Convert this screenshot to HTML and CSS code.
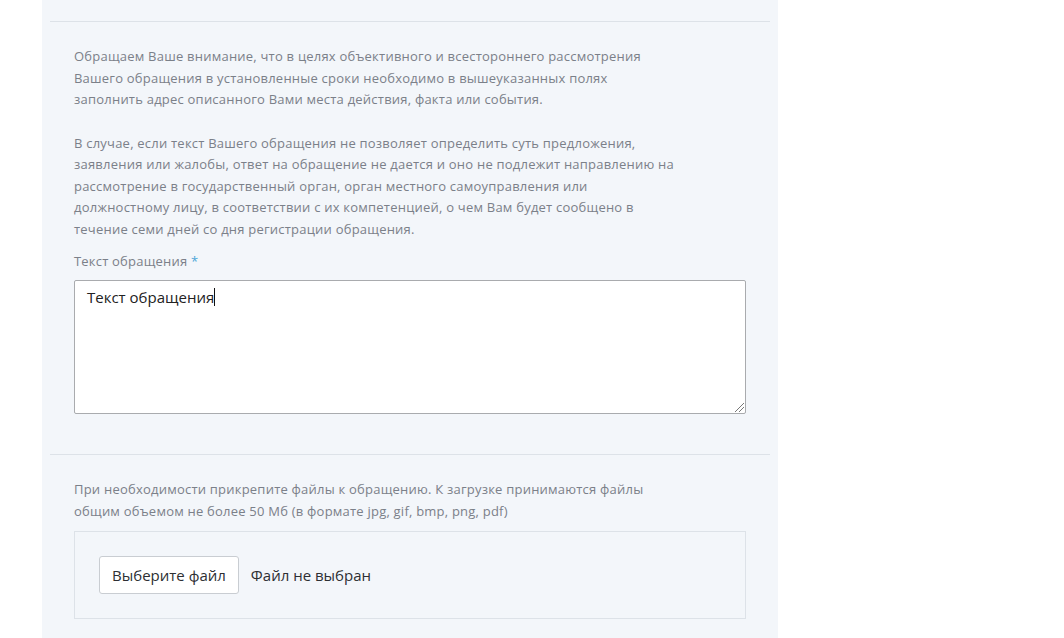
FILE: index.html
```html
<!DOCTYPE html>
<html lang="ru">
<head>
<meta charset="utf-8">
<link rel="stylesheet" href="styles.css">
</head>
<body>
<div class="panel">
  <hr class="divider top">
  <div class="section">
    <p class="note">Обращаем Ваше внимание, что в целях объективного и всестороннего рассмотрения<br>Вашего обращения в установленные сроки необходимо в вышеуказанных полях<br>заполнить адрес описанного Вами места действия, факта или события.</p>
    <p class="note gap">В случае, если текст Вашего обращения не позволяет определить суть предложения,<br>заявления или жалобы, ответ на обращение не дается и оно не подлежит направлению на<br>рассмотрение в государственный орган, орган местного самоуправления или<br>должностному лицу, в соответствии с их компетенцией, о чем Вам будет сообщено в<br>течение семи дней со дня регистрации обращения.</p>
    <label class="label">Текст обращения <span class="req">*</span></label>
    <div class="textarea">Текст обращения<span class="caret"></span><span class="grip"></span></div>
  </div>
  <hr class="divider mid">
  <div class="section files">
    <p class="note">При необходимости прикрепите файлы к обращению. К загрузке принимаются файлы<br>общим объемом не более 50 Мб (в формате jpg, gif, bmp, png, pdf)</p>
    <div class="filebox">
      <span class="btn">Выберите файл</span>
      <span class="status">Файл не выбран</span>
    </div>
  </div>
</div>
</body>
</html>
```

FILE: styles.css
```css
html, body {
  margin: 0;
  padding: 0;
  background: #ffffff;
  height: 638px;
  overflow: hidden;
}
body {
  font-family: "Open Sans", "Noto Sans", sans-serif;
}
.panel {
  margin-left: 42px;
  width: 736px;
  height: 638px;
  background: #f3f6fa;
  padding: 21px 8px 0;
  box-sizing: border-box;
}
.divider {
  margin: 0;
  border: 0;
  height: 1px;
  background: #dde2e8;
}
.section {
  padding: 24px 24px 0;
}
.note {
  margin: 0;
  font-size: 13px;
  line-height: 21.5px;
  letter-spacing: 0.22px;
  color: #7b8089;
}
.note.gap {
  margin-top: 22px;
}
.label {
  display: block;
  margin-top: 11px;
  font-size: 13px;
  line-height: 21px;
  letter-spacing: 0.2px;
  color: #7b8089;
}
.req {
  color: #4ea6d8;
}
.textarea {
  position: relative;
  margin-top: 8px;
  height: 134px;
  box-sizing: border-box;
  background: #ffffff;
  border: 1px solid #a9abae;
  border-radius: 2px;
  padding: 5px 12px;
  font-size: 15px;
  line-height: 22px;
  color: #222222;
}
.caret {
  display: inline-block;
  width: 1px;
  height: 18px;
  background: #111;
  vertical-align: -3px;
}
.grip {
  position: absolute;
  right: 1px;
  bottom: 1px;
  width: 9px;
  height: 9px;
  background: linear-gradient(135deg, transparent 45%, #777 45%, #777 52%, transparent 52%, transparent 70%, #777 70%, #777 77%, transparent 77%);
}
.mid {
  margin-top: 40px;
}
.files {
  padding-top: 24px;
}
.filebox {
  margin-top: 9px;
  height: 88px;
  box-sizing: border-box;
  border: 1px solid #dde2e8;
  display: flex;
  align-items: center;
  padding-left: 24px;
  gap: 12px;
}
.btn {
  display: inline-flex;
  align-items: center;
  height: 38px;
  box-sizing: border-box;
  padding: 0 12px;
  background: #ffffff;
  border: 1px solid #c9cdd2;
  border-radius: 3px;
  font-size: 15px;
  color: #2d2f33;
}
.status {
  font-size: 15px;
  color: #2d2f33;
}
```
